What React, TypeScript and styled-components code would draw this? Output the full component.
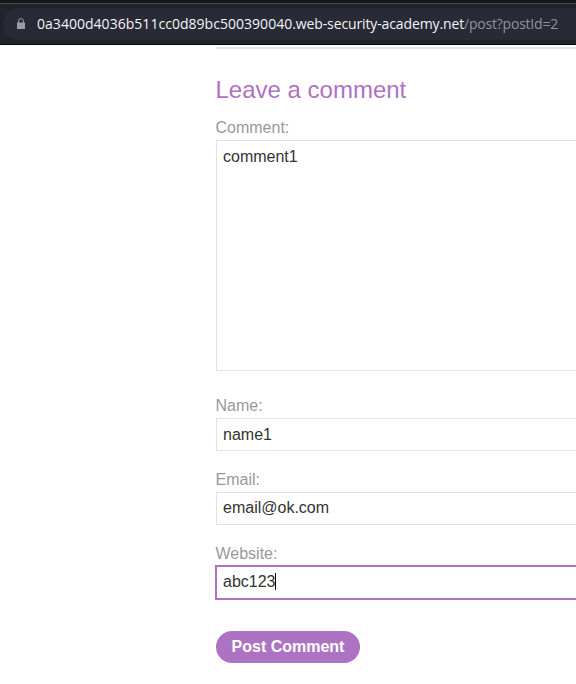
import React from 'react';
import styled, { createGlobalStyle } from 'styled-components';

const GlobalStyle = createGlobalStyle`
  * { box-sizing: border-box; }
  body {
    margin: 0;
    background: #fff;
    font-family: "Liberation Sans", Arial, sans-serif;
    overflow: hidden;
  }
`;

const Window = styled.div`
  width: 576px;
  height: 684px;
  overflow: hidden;
  display: flex;
  flex-direction: column;
`;

const TabStrip = styled.div`
  flex: none;
  height: 4px;
  background: #17181b;
  border-bottom: 1px solid #4d4d51;
`;

const Toolbar = styled.header`
  flex: none;
  height: 41px;
  padding: 4px 0 4px 3px;
  background: #21232d;
  border-bottom: 1px solid #060608;
`;

const AddressBar = styled.div`
  height: 32px;
  padding-left: 14px;
  display: flex;
  align-items: center;
  gap: 12px;
  background: #282a36;
  border-radius: 16px 0 0 16px;
`;

const Url = styled.span`
  font: 14px/20px "Open Sans", "Noto Sans", sans-serif;
  color: #f4f4f5;
  white-space: nowrap;
`;

const UrlPart = styled.span<{ $tracking: number; $dim?: boolean }>`
  letter-spacing: ${(p) => p.$tracking}px;
  color: ${(p) => (p.$dim ? '#929398' : 'inherit')};
`;

const Page = styled.main`
  margin: 2px 0 0 215.5px;
  width: 400px;
  flex: none;
`;

const Divider = styled.hr`
  margin: 0;
  border: 0;
  height: 2px;
  background: #e5e5e5;
`;

const Title = styled.h2`
  margin: 27px 0 0;
  font-size: 24px;
  line-height: 28px;
  font-weight: 400;
  color: #ad73c2;
`;

const Field = styled.div<{ $gap: number }>`
  margin-top: ${(p) => p.$gap}px;
`;

const Label = styled.label`
  display: block;
  height: 22px;
  font-size: 16px;
  line-height: 20px;
  color: #999;
`;

const controlText = `
  display: block;
  width: 100%;
  margin: 0;
  border: 1px solid #e3e3e3;
  border-radius: 0;
  background: #fff;
  color: #333332;
  font: 16px/18px "Liberation Sans", Arial, sans-serif;
  resize: none;
`;

const TextArea = styled.textarea`
  ${controlText}
  height: 231px;
  padding: 7px 6.5px;
  outline: none;
`;

const Input = styled.input<{ $lift?: number }>`
  ${controlText}
  height: 33px;
  padding: 0 6.5px ${(p) => p.$lift ?? 0}px;
  outline: none;
`;

const FocusedInput = styled.div`
  display: flex;
  align-items: center;
  height: 35px;
  margin: -1px 0 0 -1px;
  padding: 0 6.5px 2px;
  border: 2px solid #ad73c2;
  color: #333332;
  font-size: 16px;
  line-height: 18px;
`;

const Caret = styled.span`
  width: 1px;
  height: 17px;
  margin-left: -1px;
  background: #000;
`;

const SubmitButton = styled.button`
  display: block;
  width: 144px;
  height: 32px;
  margin: 31px 0 0 0.5px;
  padding: 0;
  border: 0;
  border-radius: 16px;
  background: #ad73c2;
  color: #fff;
  font: bold 16px/18px "Liberation Sans", Arial, sans-serif;
`;

const LockIcon = () => (
  <svg width="8" height="12" viewBox="0 0 8 12">
    <path d="M1.6 5V3a2.4 2.4 0 0 1 4.8 0v2" fill="none" stroke="#9b9da3" strokeWidth="1" />
    <rect x="0" y="4.5" width="8" height="6.5" rx="0.5" fill="#9b9da3" />
  </svg>
);

export default function App() {
  return (
    <Window>
      <GlobalStyle />
      <TabStrip />
      <Toolbar>
        <AddressBar>
          <LockIcon />
          <Url>
            <UrlPart $tracking={0.03}>0a3400d4036b511cc0d89bc500390040</UrlPart>
            <UrlPart $tracking={-0.12}>.web-security-academy.net</UrlPart>
            <UrlPart $tracking={-0.22} $dim>/post?postId=2</UrlPart>
          </Url>
        </AddressBar>
      </Toolbar>
      <Page>
        <Divider />
        <Title>Leave a comment</Title>
        <Field $gap={14}>
          <Label>Comment:</Label>
          <TextArea defaultValue="comment1" spellCheck={false} />
        </Field>
        <Field $gap={25}>
          <Label>Name:</Label>
          <Input defaultValue="name1" />
        </Field>
        <Field $gap={19}>
          <Label>Email:</Label>
          <Input defaultValue="email@ok.com" $lift={2} />
        </Field>
        <Field $gap={19}>
          <Label>Website:</Label>
          <FocusedInput>
            abc123
            <Caret />
          </FocusedInput>
        </Field>
        <SubmitButton>Post Comment</SubmitButton>
      </Page>
    </Window>
  );
}
